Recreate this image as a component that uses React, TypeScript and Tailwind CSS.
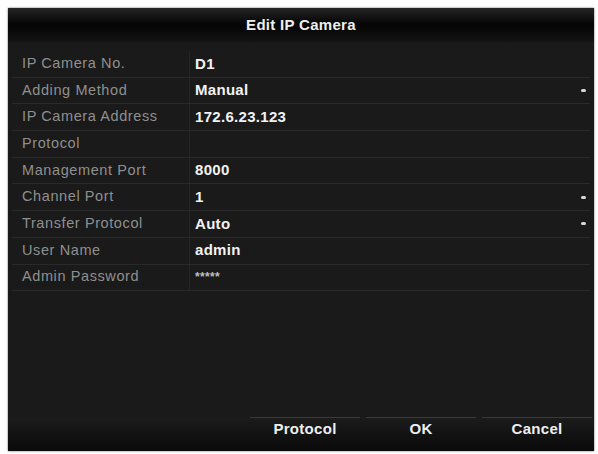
import React from 'react';

type Row = { label: string; value: string; dropdown?: boolean };

const rows: Row[] = [
  { label: 'IP Camera No.', value: 'D1' },
  { label: 'Adding Method', value: 'Manual', dropdown: true },
  { label: 'IP Camera Address', value: '172.6.23.123' },
  { label: 'Protocol', value: '' },
  { label: 'Management Port', value: '8000' },
  { label: 'Channel Port', value: '1', dropdown: true },
  { label: 'Transfer Protocol', value: 'Auto', dropdown: true },
  { label: 'User Name', value: 'admin' },
  { label: 'Admin Password', value: '*****' },
];

export default function App() {
  return (
    <div className="h-[454px] w-[598px] bg-white pl-[8px] pr-[4px] pt-[8px] pb-[3px] font-['Liberation_Sans',Arial,sans-serif]">
      <div className="flex h-full flex-col bg-[#1a1a1a] shadow-[0_0_2px_rgba(0,0,0,0.6)]">
        {/* title bar */}
        <div className="flex h-[34px] items-center justify-center bg-gradient-to-b from-[#262626] via-[#050505] to-[#141414] text-[15px] font-bold tracking-[0.3px] text-[#eeeeee]">
          Edit IP Camera
        </div>

        {/* form */}
        <div className="flex flex-col px-[4px] pt-[9px]">
          {rows.map((r) => (
            <div key={r.label} className="flex h-[26.7px] border-b border-[#2a2a2a]">
              <div className="flex w-[178px] items-center border-r border-[#262626] pl-[10px] text-[14.5px] tracking-[0.6px] text-[#8f8f8f]">
                {r.label}
              </div>
              <div className="flex flex-1 items-center justify-between pl-[5px] pr-[4px] text-[15px] font-bold tracking-[0.3px] text-[#f2f2f2]">
                <span className={r.value === '*****' ? 'text-[12px] text-[#bdbdbd]' : ''}>{r.value}</span>
                {r.dropdown && <span className="h-[3px] w-[5px] rounded-full bg-[#d8d8d8]" />}
              </div>
            </div>
          ))}
        </div>

        <div className="flex-1" />

        {/* button bar */}
        <div className="flex h-[34px] items-start justify-end gap-[6px] bg-gradient-to-b from-[#1c1c1c] to-[#0a0a0a] pr-[2px]">
          {['Protocol', 'OK', 'Cancel'].map((b) => (
            <div
              key={b}
              className="flex h-[24px] w-[110px] items-center justify-center border-t border-[#3a3a3a] text-[15px] font-bold tracking-[0.3px] text-[#eeeeee]"
            >
              {b}
            </div>
          ))}
        </div>
      </div>
    </div>
  );
}
